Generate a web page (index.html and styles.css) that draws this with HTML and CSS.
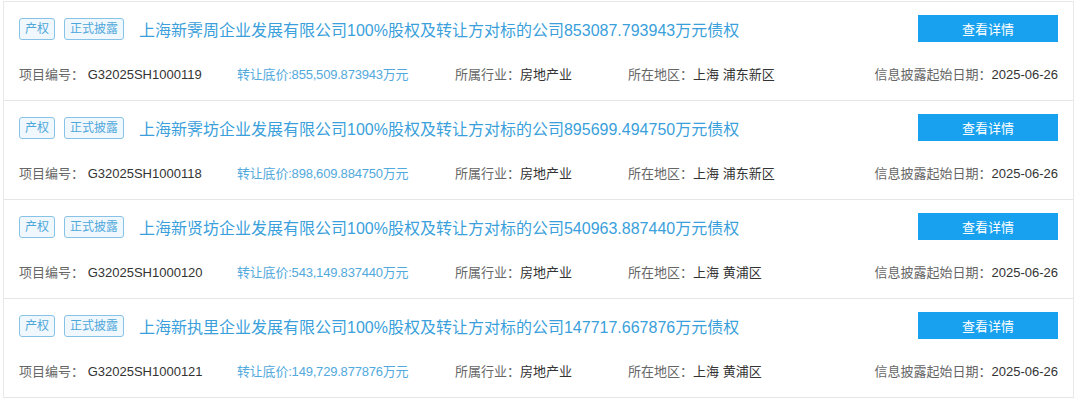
FILE: index.html
```html
<!DOCTYPE html>
<html lang="zh-CN">
<head>
<meta charset="utf-8">
<title>项目列表</title>
<link rel="stylesheet" href="styles.css">
</head>
<body>
<div class="list">
  <div class="item">
    <div class="top">
      <span class="tag">产权</span>
      <span class="tag">正式披露</span>
      <a class="title">上海新霁周企业发展有限公司100%股权及转让方对标的公司853087.793943万元债权</a>
      <button class="btn">查看详情</button>
    </div>
    <div class="meta">
      <div class="c"><span class="lb">项目编号：</span> <span class="v">G32025SH1000119</span></div>
      <div class="c price">转让底价:855,509.873943万元</div>
      <div class="c"><span class="lb">所属行业：</span><span class="v">房地产业</span></div>
      <div class="c"><span class="lb">所在地区：</span><span class="v">上海 浦东新区</span></div>
      <div class="c"><span class="lb">信息披露起始日期：</span><span class="v">2025-06-26</span></div>
    </div>
  </div>
  <div class="item">
    <div class="top">
      <span class="tag">产权</span>
      <span class="tag">正式披露</span>
      <a class="title">上海新霁坊企业发展有限公司100%股权及转让方对标的公司895699.494750万元债权</a>
      <button class="btn">查看详情</button>
    </div>
    <div class="meta">
      <div class="c"><span class="lb">项目编号：</span> <span class="v">G32025SH1000118</span></div>
      <div class="c price">转让底价:898,609.884750万元</div>
      <div class="c"><span class="lb">所属行业：</span><span class="v">房地产业</span></div>
      <div class="c"><span class="lb">所在地区：</span><span class="v">上海 浦东新区</span></div>
      <div class="c"><span class="lb">信息披露起始日期：</span><span class="v">2025-06-26</span></div>
    </div>
  </div>
  <div class="item">
    <div class="top">
      <span class="tag">产权</span>
      <span class="tag">正式披露</span>
      <a class="title">上海新贤坊企业发展有限公司100%股权及转让方对标的公司540963.887440万元债权</a>
      <button class="btn">查看详情</button>
    </div>
    <div class="meta">
      <div class="c"><span class="lb">项目编号：</span> <span class="v">G32025SH1000120</span></div>
      <div class="c price">转让底价:543,149.837440万元</div>
      <div class="c"><span class="lb">所属行业：</span><span class="v">房地产业</span></div>
      <div class="c"><span class="lb">所在地区：</span><span class="v">上海 黄浦区</span></div>
      <div class="c"><span class="lb">信息披露起始日期：</span><span class="v">2025-06-26</span></div>
    </div>
  </div>
  <div class="item">
    <div class="top">
      <span class="tag">产权</span>
      <span class="tag">正式披露</span>
      <a class="title">上海新执里企业发展有限公司100%股权及转让方对标的公司147717.667876万元债权</a>
      <button class="btn">查看详情</button>
    </div>
    <div class="meta">
      <div class="c"><span class="lb">项目编号：</span> <span class="v">G32025SH1000121</span></div>
      <div class="c price">转让底价:149,729.877876万元</div>
      <div class="c"><span class="lb">所属行业：</span><span class="v">房地产业</span></div>
      <div class="c"><span class="lb">所在地区：</span><span class="v">上海 黄浦区</span></div>
      <div class="c"><span class="lb">信息披露起始日期：</span><span class="v">2025-06-26</span></div>
    </div>
  </div>
</div>
</body>
</html>
```
FILE: styles.css
```css
* { box-sizing: border-box; }
html, body { margin: 0; padding: 0; background: #fff; }
body {
  font-family: "Liberation Sans", "Noto Sans CJK SC", sans-serif;
  padding: 1px 0 0 3px;
}
.list {
  width: 1071px;
  border: 1px solid #e8e8e8;
  border-bottom: none;
}
.item {
  height: 99px;
  padding: 13px 15px 0 15px;
  border-bottom: 1px solid #e6e6e6;
}
.top {
  display: flex;
  align-items: center;
  height: 27px;
}
.tag {
  height: 22px;
  line-height: 20px;
  padding: 0 5px;
  font-size: 12px;
  color: #4ea7db;
  background: #f1f8fd;
  border: 1px solid #86c3e6;
  border-radius: 3px;
  margin-right: 9px;
}
.title {
  margin-left: 6px;
  font-size: 16px;
  color: #3a9fdb;
  flex: 1;
  white-space: nowrap;
}
.btn {
  width: 140px;
  height: 27px;
  border: none;
  background: #17a1ef;
  color: #fff;
  font-family: inherit;
  font-size: 13px;
  padding: 0;
}
.meta {
  display: grid;
  grid-template-columns: 218px 218px 173px 1fr auto;
  margin-top: 23px;
  font-size: 13px;
  line-height: 20px;
  white-space: nowrap;
}
.lb { color: #666; }
.v { color: #333; }
.price { color: #52a9dc; letter-spacing: -0.2px; }
```
